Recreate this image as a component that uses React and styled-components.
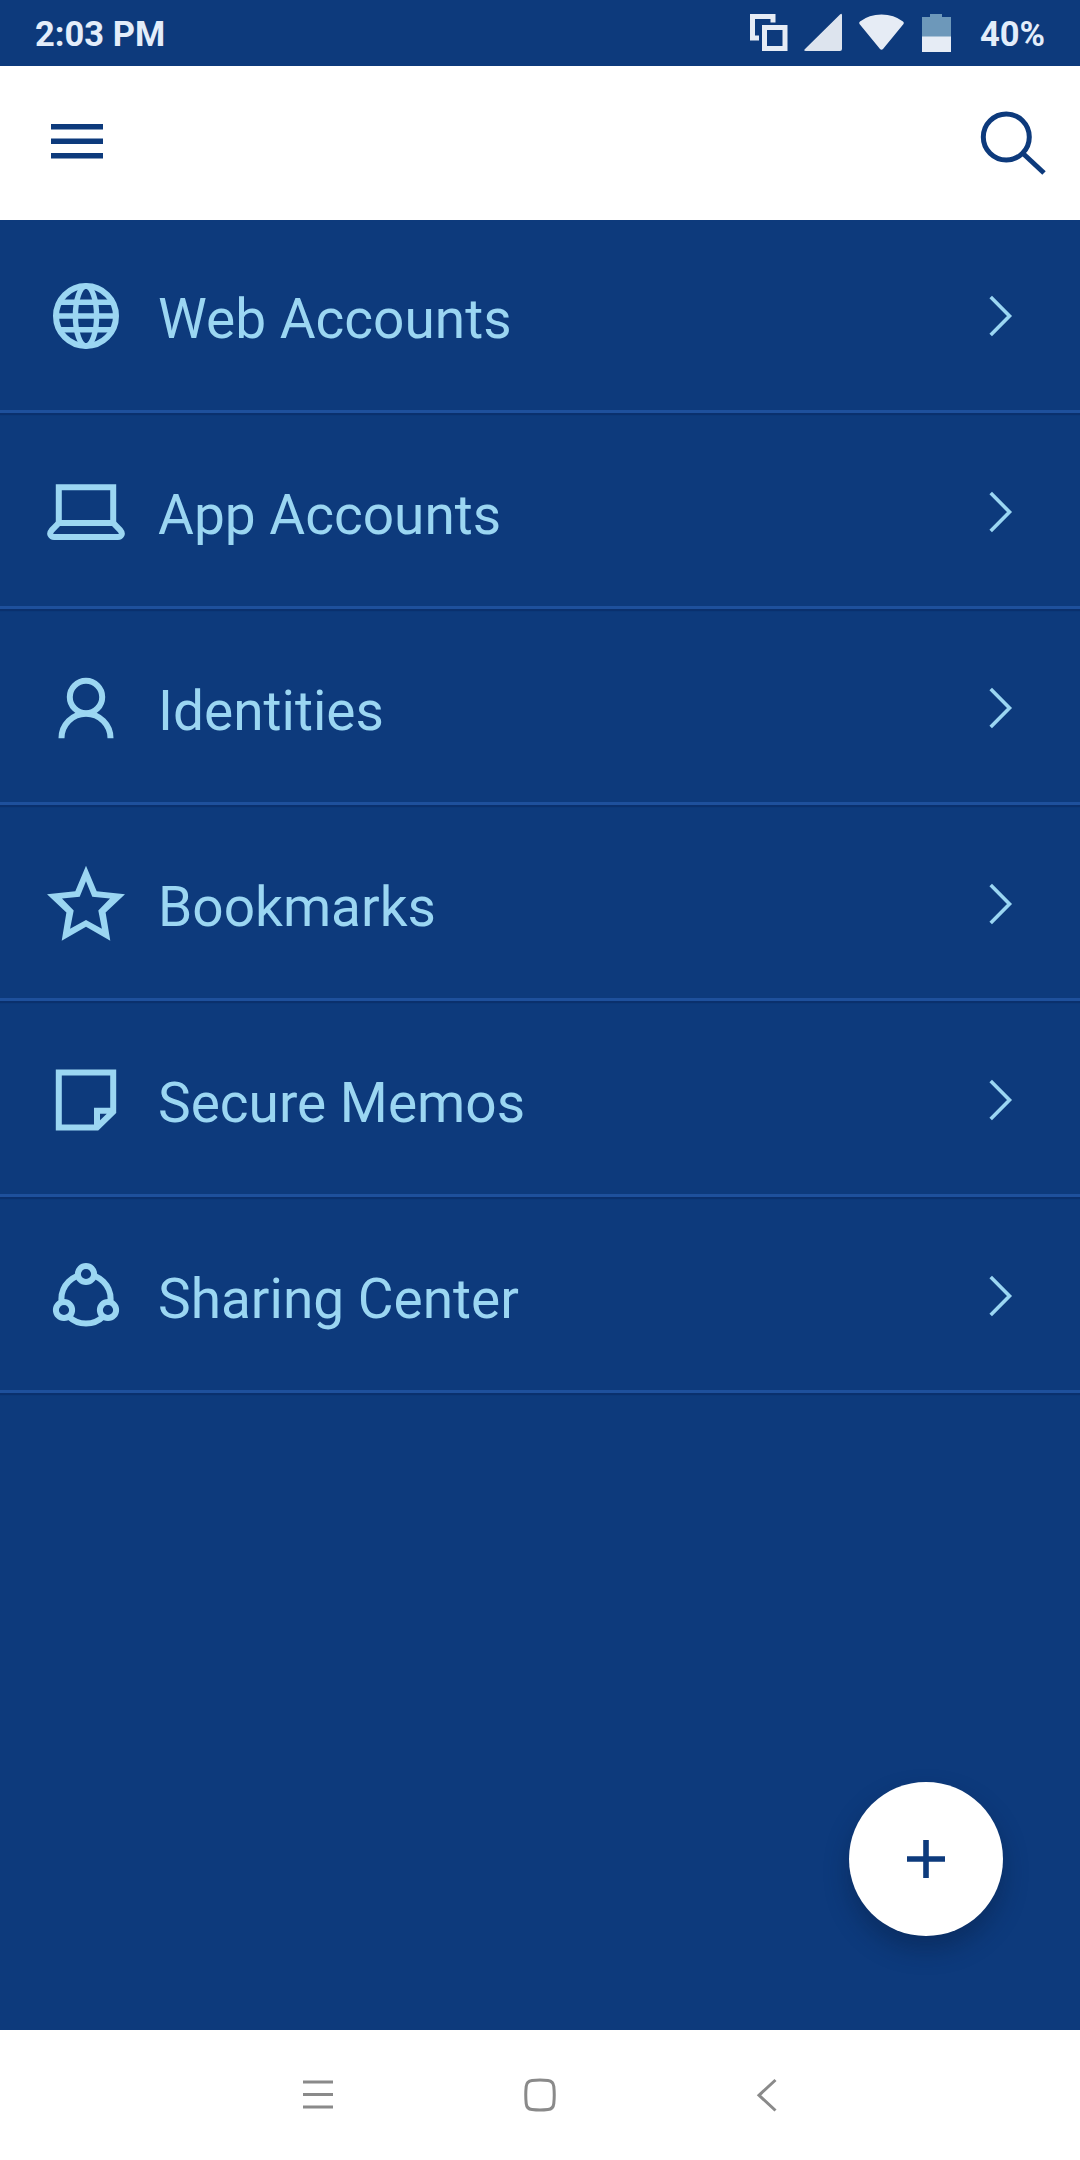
import React from "react";
import styled, { createGlobalStyle } from "styled-components";

const navy = "#0d3a7c";
const sky = "#9bd6f2";

const GlobalStyle = createGlobalStyle`
	* {
		box-sizing: border-box;
	}

	body {
		margin: 0;
		background: ${navy};
		font-family: Roboto, "Liberation Sans", sans-serif;
	}
`;

const Screen = styled.div`
	position: relative;
	display: flex;
	flex-direction: column;
	width: 1080px;
	height: 2160px;
	overflow: hidden;
	background: ${navy};
`;

const StatusBar = styled.header`
	display: flex;
	align-items: center;
	justify-content: space-between;
	height: 66px;
	padding: 2px 35px 0 35px;
	color: #e3edfa;
	font-size: 34.5px;
	font-weight: 700;
	line-height: 64px;
`;

const StatusIcons = styled.div`
	display: flex;
	align-items: center;
	gap: 28px;

	svg {
		display: block;
		margin-top: -2px;
	}
`;

const AppBar = styled.div`
	display: flex;
	align-items: center;
	justify-content: space-between;
	height: 154px;
	padding: 0 32px 0 51px;
	background: #fff;
	z-index: 1;
`;

const IconButton = styled.button`
	display: flex;
	padding: 0;
	border: 0;
	background: none;
	color: ${navy};
`;

const Menu = styled.ul`
	flex: 1;
	margin: -3px 0 0;
	padding: 0;
	list-style: none;
`;

const MenuRow = styled.li`
	display: flex;
	align-items: center;
	height: 196px;
	padding: 5px 67px 0 46px;
	border-bottom: 3px solid #1e509c;
	box-shadow: 0 2px 1px #0a306d;
	color: ${sky};
`;

const MenuLabel = styled.span`
	flex: 1;
	margin-left: 32px;
	padding-top: 6px;
	font-size: 55px;
	line-height: 66px;
`;

const AddButton = styled.button`
	position: absolute;
	right: 77px;
	bottom: 224px;
	display: flex;
	align-items: center;
	justify-content: center;
	width: 154px;
	height: 154px;
	padding: 0;
	border: 0;
	border-radius: 50%;
	background: #fff;
	color: ${navy};
	box-shadow: 0 13px 24px rgba(8, 28, 60, 0.4);
`;

const NavBar = styled.nav`
	display: flex;
	align-items: center;
	justify-content: space-between;
	height: 130px;
	padding: 0 302px;
	background: #fff;
	color: #8a8a8a;
`;

const RowIcon = ({ children }) => (
	<svg width="80" height="80" viewBox="0 0 80 80" fill="none" stroke="currentColor" strokeWidth="6">
		{children}
	</svg>
);

const NavIcon = ({ children }) => (
	<svg width="34" height="34" viewBox="0 0 34 34" fill="none" stroke="currentColor" strokeWidth="3">
		{children}
	</svg>
);

const items = [
	{
		label: "Web Accounts",
		icon: (
			<>
				<circle cx="40" cy="40" r="30" />
				<ellipse cx="40" cy="40" rx="10.6" ry="30" strokeWidth="5.4" />
				<path d="M13 26.3h54M10 40h60M13 53.7h54" strokeWidth="5.4" />
			</>
		),
	},
	{
		label: "App Accounts",
		icon: (
			<>
				<path d="M12.8 51V15.3h54.4V51" />
				<path d="M12.8 51h54.4l7.2 7.4C77.4 61.8 75 65 72 65H8c-3 0-5.4-3.2-2.4-6.6z" />
			</>
		),
	},
	{
		label: "Identities",
		icon: (
			<>
				<circle cx="40" cy="29" r="16.2" />
				<path d="M15.5 70.3a24.5 24.5 0 0 1 49 0" />
			</>
		),
	},
	{
		label: "Bookmarks",
		icon: (
			<path
				fill="currentColor"
				stroke="none"
				fillRule="evenodd"
				d="M40 1.7 50.7 27.3 79 30.3 59.6 48.6 64.3 76.7 40 62.8 15.7 76.7 20.4 48.6 1 30.3 29.3 27.3zM40 17.2 33.7 32.8 16 34.6 27.7 46.4 24.1 64.8 40 56 55.9 64.8 52.3 46.4 64 34.6 46.3 32.8z"
			/>
		),
	},
	{
		label: "Secure Memos",
		icon: <path d="M12.8 12.4h54.4v39.3L51 67.5H12.8zM51 67.5V50.7h16.2" />,
	},
	{
		label: "Sharing Center",
		icon: (
			<>
				<circle cx="40" cy="43" r="24.6" />
				<g fill={navy}>
					<circle cx="40" cy="18" r="8.1" />
					<circle cx="18" cy="54" r="8.1" />
					<circle cx="62" cy="54" r="8.1" />
				</g>
			</>
		),
	},
];

const App = () => {
	return (
		<>
			<GlobalStyle />
			<Screen>
				<StatusBar>
					<span>2:03 PM</span>
					<StatusIcons>
						{/* multi window, signal, wifi and battery */}
						<svg width="202" height="40" viewBox="0 0 202 40" fill="#e6ecf5">
							<path
								d="M9 25H2.5V3.5H23V9.5M14.5 14.5H35V35.5H14.5z"
								fill="none"
								stroke="#e6ecf5"
								strokeWidth="5"
							/>
							<path d="M90 1.5q2-2 2 .8V36q0 2-2 2H56q-3 0-1-2z" fill="#dde4ee" />
							<path d="M109.5 11q-1-1.5 .5-2.5Q119 1.5 131.5 1.5T153 8.5q1.5 1 .5 2.5L133 36q-1.5 1.5-3 0z" />
							<path d="M172 4h8V1h12v3h9v20h-29z" fill="#6d98ba" />
							<path d="M172 23.5h29V39h-29z" />
						</svg>
						<span>40%</span>
					</StatusIcons>
				</StatusBar>
				<AppBar>
					<IconButton aria-label="Menu">
						<svg width="52" height="40" viewBox="0 0 52 40" stroke="currentColor" strokeWidth="5.5">
							<path d="M0 3.7h52M0 18.2h52M0 32.7h52" />
						</svg>
					</IconButton>
					<IconButton aria-label="Search">
						<svg width="68" height="64" viewBox="0 0 68 64" fill="none" stroke="currentColor" strokeWidth="5">
							<circle cx="26.3" cy="26" r="23" />
							<path d="M42.5 42 64 62" />
						</svg>
					</IconButton>
				</AppBar>
				<Menu>
					{items.map((item) => (
						<MenuRow key={item.label}>
							<RowIcon>{item.icon}</RowIcon>
							<MenuLabel>{item.label}</MenuLabel>
							<svg width="24" height="42" viewBox="0 0 24 42" fill="none" stroke="currentColor" strokeWidth="3.6">
								<path d="M1.7 2 20.5 21 1.7 40" />
							</svg>
						</MenuRow>
					))}
				</Menu>
				<AddButton aria-label="Add">
					<svg width="40" height="40" viewBox="0 0 40 40" stroke="currentColor" strokeWidth="5.6">
						<path d="M1 20h38M20 1v38" />
					</svg>
				</AddButton>
				<NavBar>
					<NavIcon>
						<path d="M1 4h30M1 16.5h30M1 29h30" />
					</NavIcon>
					<NavIcon>
						<path d="M9 2.4Q17 1.4 25 2.4 30.3 3 30.8 8.5 31.7 17 30.8 25.5 30.3 31 25 31.6 17 32.6 9 31.6 3.7 31 3.2 25.5 2.3 17 3.2 8.5 3.7 3 9 2.4z" />
					</NavIcon>
					<NavIcon>
						<path d="M31.5 2 15 17.3 31.5 32.5" />
					</NavIcon>
				</NavBar>
			</Screen>
		</>
	);
};

export default App;
